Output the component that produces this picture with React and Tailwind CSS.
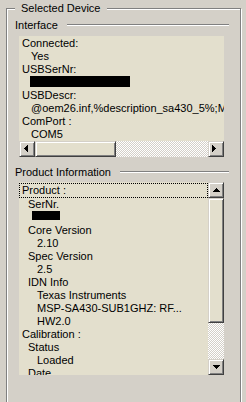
import React from "react";

const BTN =
  "relative shrink-0 w-[16px] h-[16px] bg-[#d4d0c8] border border-t-[#d4d0c8] border-l-[#d4d0c8] border-r-[#404040] border-b-[#404040] shadow-[inset_1px_1px_0_#ffffff,inset_-1px_-1px_0_#808080]";
const THUMB =
  "shrink-0 bg-[#e3dfcd] border border-t-[#d4d0c8] border-l-[#d4d0c8] border-r-[#404040] border-b-[#404040] shadow-[inset_1px_1px_0_#ffffff,inset_-1px_-1px_0_#808080]";
const TRACK =
  "bg-[image:repeating-conic-gradient(#ffffff_0%_25%,#d4d0c8_0%_50%)] bg-[length:2px_2px]";

function Arrow({ dir }) {
  let rects = [];
  if (dir === "left") {
    rects = [
      [4, 6, 1, 1],
      [5, 5, 1, 3],
      [6, 4, 1, 5],
      [7, 3, 1, 7],
    ];
  } else if (dir === "right") {
    rects = [
      [3, 3, 1, 7],
      [4, 4, 1, 5],
      [5, 5, 1, 3],
      [6, 6, 1, 1],
    ];
  } else if (dir === "up") {
    rects = [
      [7, 5, 1, 1],
      [6, 6, 3, 1],
      [5, 7, 5, 1],
      [4, 8, 7, 1],
    ];
  } else {
    rects = [
      [4, 5, 7, 1],
      [5, 6, 5, 1],
      [6, 7, 3, 1],
      [7, 8, 1, 1],
    ];
  }
  return (
    <svg width="14" height="14" className="block" shapeRendering="crispEdges">
      {rects.map((r, i) => (
        <rect key={i} x={r[0]} y={r[1]} width={r[2]} height={r[3]} fill="#000" />
      ))}
    </svg>
  );
}

function SectionHeader({ children, className }) {
  return (
    <div className={"ml-[8px] mr-[11px] flex items-start gap-[9px] " + className}>
      <span className="whitespace-nowrap">{children}</span>
      <div className="flex-1 mt-[5px] h-[2px] border-t border-b border-t-[#808080] border-b-white" />
    </div>
  );
}

function HScroll() {
  return (
    <div className="flex h-[16px]">
      <div className={BTN}>
        <Arrow dir="left" />
      </div>
      <div className={THUMB + " w-[81px] h-[16px]"} />
      <div className={"flex-1 h-[16px] " + TRACK} />
      <div className={BTN}>
        <Arrow dir="right" />
      </div>
    </div>
  );
}

function VScroll() {
  return (
    <div className="flex flex-col w-[16px] shrink-0">
      <div className={BTN}>
        <Arrow dir="up" />
      </div>
      <div className={THUMB + " w-[16px] h-[125px]"} />
      <div className={"flex-1 w-[16px] " + TRACK} />
      <div className={BTN}>
        <Arrow dir="down" />
      </div>
    </div>
  );
}

export default function App() {
  return (
    <div className="w-[246px] h-[402px] overflow-hidden bg-[#d4d0c8] text-black text-[11px] leading-[13px] font-['Liberation_Sans',Arial,sans-serif]">
      <fieldset className="mt-[2px] ml-[6px] w-[235px] h-[440px] border border-[#808080] shadow-[inset_1px_1px_0_#ffffff,1px_1px_0_#ffffff]">
        <legend className="ml-[8px] px-[6px] bg-[#d4d0c8]">Selected Device</legend>

        <SectionHeader className="mt-[4px]">Interface</SectionHeader>
        <div className="mt-[4px] ml-[12px] w-[205px] bg-[#e3dfcd]">
          <div className="h-[105px] pt-[1px] overflow-hidden whitespace-nowrap">
            <div className="h-[13px] pl-[3px]">Connected:</div>
            <div className="h-[13px] pl-[12px]">Yes</div>
            <div className="h-[13px] pl-[3px]">USBSerNr:</div>
            <div className="h-[13px] pl-[11px]">
              <div className="w-[100px] h-[11px] bg-black" />
            </div>
            <div className="h-[13px] pl-[3px]">USBDescr:</div>
            <div className="h-[13px] pl-[12px]">@oem26.inf,%description_sa430_5%;MSP-SA430-SUB1GHZ</div>
            <div className="h-[13px] pl-[3px]">ComPort :</div>
            <div className="h-[13px] pl-[12px]">COM5</div>
          </div>
          <HScroll />
        </div>

        <SectionHeader className="mt-[9px]">Product Information</SectionHeader>
        <div className="mt-[3px] ml-[12px] w-[205px] h-[193px] flex bg-[#e3dfcd]">
          <div className="flex-1 min-w-0 pt-[1px] overflow-hidden whitespace-nowrap">
            <div className="h-[15px] border border-dotted border-black pl-[2px]">Product :</div>
            <div className="h-[13px] pl-[9px]">SerNr.</div>
            <div className="h-[13px] pl-[13px]">
              <div className="w-[28px] h-[9px] bg-black" />
            </div>
            <div className="h-[13px] pl-[9px]">Core Version</div>
            <div className="h-[13px] pl-[18px]">2.10</div>
            <div className="h-[13px] pl-[9px]">Spec Version</div>
            <div className="h-[13px] pl-[18px]">2.5</div>
            <div className="h-[13px] pl-[9px]">IDN Info</div>
            <div className="h-[13px] pl-[18px]">Texas Instruments</div>
            <div className="h-[13px] pl-[18px]">MSP-SA430-SUB1GHZ: RF...</div>
            <div className="h-[13px] pl-[18px]">HW2.0</div>
            <div className="h-[13px] pl-[3px]">Calibration :</div>
            <div className="h-[13px] pl-[9px]">Status</div>
            <div className="h-[13px] pl-[18px]">Loaded</div>
            <div className="h-[13px] pl-[9px]">Date</div>
          </div>
          <VScroll />
        </div>
      </fieldset>
    </div>
  );
}
